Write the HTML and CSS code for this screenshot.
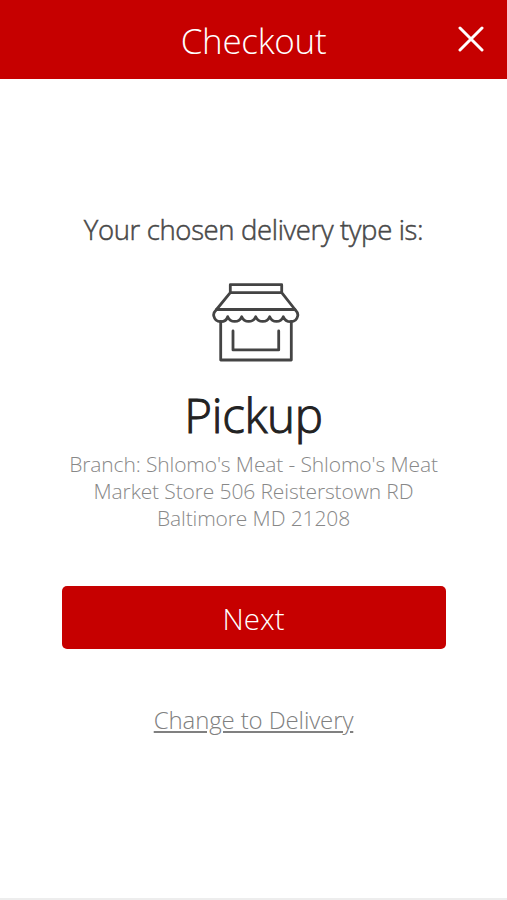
FILE: index.html
```html
<!DOCTYPE html>
<html lang="en">
<head>
  <meta charset="UTF-8">
  <meta name="viewport" content="width=device-width, initial-scale=1.0">
  <title>Checkout</title>
  <link rel="stylesheet" href="styles.css">
</head>
<body>
  <header class="top-bar">
    <h1>Checkout</h1>
    <button class="close-button" aria-label="Close">
      <svg width="26" height="26" viewBox="0 0 26 26">
        <path d="M2 2L24 24M24 2L2 24" />
      </svg>
    </button>
  </header>

  <main class="delivery-type">
    <p class="intro">Your chosen delivery type is:</p>
    <svg class="store-icon" width="90" height="80" viewBox="0 0 90 80">
      <!-- roof -->
      <path d="M19.3 9.7V1.7H70.7V9.7ZM19.3 9.7L5.5 26.5H84L70.7 9.7" />
      <!-- awning -->
      <path d="M5.5 26.5C3 29 2.2 31 2.8 33C4.5 40.5 14.5 40.5 16.7 33.7C19.5 40 28 40 30.7 33.7C33.5 40 42 40 44.7 33.7C47.5 40 56 40 58.7 33.7C61.5 40 69.5 40 72.3 33.7C75 40.5 85 40.5 86.7 33C87.2 31 86.5 29 84 26.5" />
      <!-- walls and window -->
      <path d="M9.7 38.5V77H80.3V38.5M22 48V66.9H67.7V48" />
    </svg>
    <h2>Pickup</h2>
    <p class="branch">Branch: Shlomo's Meat - Shlomo's Meat Market Store 506 Reisterstown RD Baltimore MD 21208</p>
    <button class="next-button">Next</button>
    <a class="change-link" href="#">Change to Delivery</a>
  </main>
</body>
</html>
```
FILE: styles.css
```css
* {
  box-sizing: border-box;
}
body {
  display: flex;
  flex-direction: column;
  height: 100vh;
  margin: 0;
  border-bottom: 2px solid #ededed;
  background-color: #fff;
  font-family: "Open Sans", sans-serif;
  font-weight: 300;
}
h1, h2, p {
  margin: 0;
  font-weight: 300;
}
.top-bar {
  display: grid;
  grid-template-columns: 1fr auto 1fr;
  align-items: center;
  height: 79px;
  padding: 0 23px;
  background-color: #c60000;
  color: #fff;
}
.top-bar h1 {
  grid-column: 2;
  padding-top: 3px;
  font-size: 35px;
  letter-spacing: -0.3px;
  line-height: 48px;
}
.close-button {
  justify-self: end;
  height: 26px;
  margin-bottom: 2px;
  padding: 0;
  border: none;
  background: none;
  cursor: pointer;
}
.close-button svg {
  display: block;
  fill: none;
  stroke: #fff;
  stroke-width: 3;
  stroke-linecap: round;
}
.delivery-type {
  display: flex;
  flex-direction: column;
  align-items: center;
  padding-top: 133px;
  text-align: center;
}
.intro {
  color: #484848;
  font-size: 27.5px;
  letter-spacing: -0.35px;
  line-height: 36px;
  -webkit-text-stroke: 0.5px #484848;
}
.store-icon {
  margin-top: 35px;
  margin-left: 5px;
  fill: none;
  stroke: #444;
  stroke-width: 2.8;
  stroke-linecap: round;
  stroke-linejoin: round;
}
.delivery-type h2 {
  margin-top: 20px;
  color: #222;
  font-size: 47.5px;
  letter-spacing: -0.3px;
  line-height: 64px;
  -webkit-text-stroke: 1px #222;
}
.branch {
  width: 384px;
  margin-top: 4px;
  color: #888;
  font-size: 21px;
  letter-spacing: -0.12px;
  line-height: 27px;
}
.next-button {
  width: 384px;
  height: 63px;
  margin-top: 54px;
  padding-top: 3px;
  border: none;
  border-radius: 5px;
  background-color: #c60000;
  color: #fff;
  font: inherit;
  font-size: 29.5px;
  cursor: pointer;
}
.change-link {
  margin-top: 54px;
  color: #808080;
  font-size: 24px;
  letter-spacing: -0.12px;
  line-height: 34px;
}
```
